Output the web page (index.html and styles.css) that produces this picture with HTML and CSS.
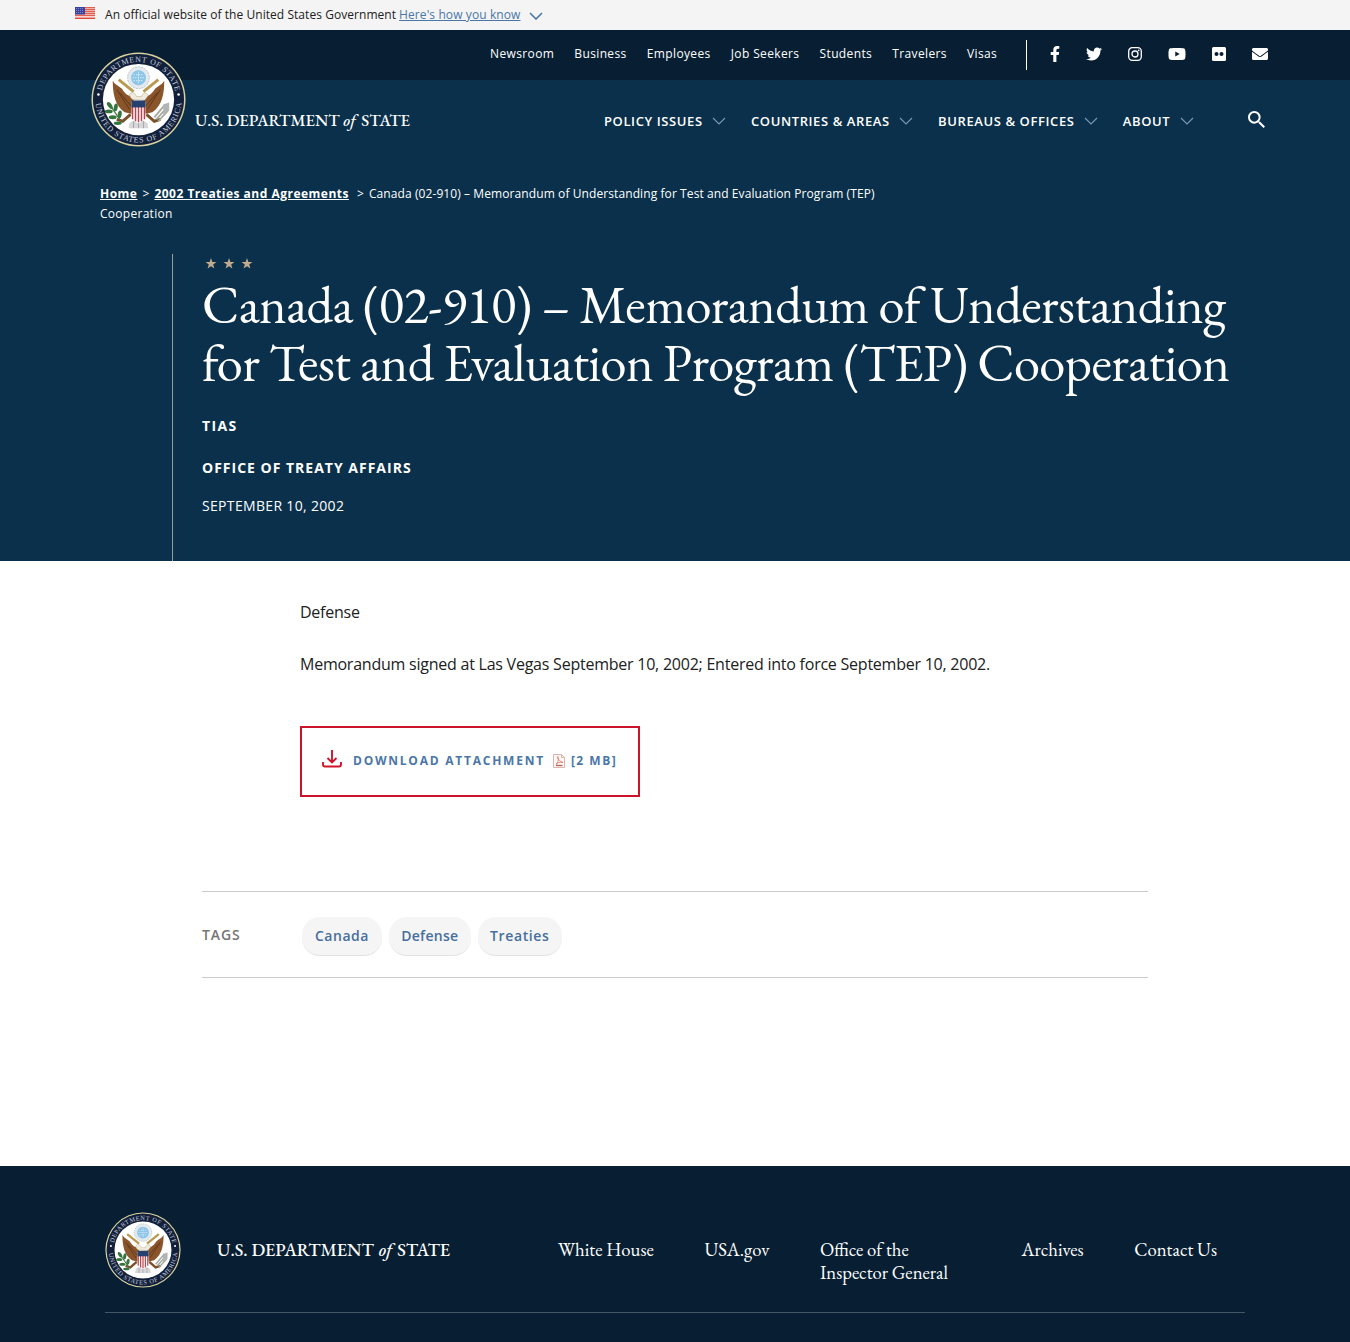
FILE: index.html
```html
<!DOCTYPE html>
<html lang="en">
<head>
<meta charset="utf-8">
<title>Canada (02-910) – Memorandum of Understanding for Test and Evaluation Program (TEP) Cooperation</title>
<link rel="stylesheet" href="styles.css">
</head>
<body>
<svg class="defs" width="0" height="0" aria-hidden="true">
  <symbol id="chev" viewBox="0 0 14 8"><path d="M1 1l6 6 6-6" fill="none" stroke="currentColor"/></symbol>
  <symbol id="star" viewBox="0 0 12 12"><path d="M6 0l1.500 4.300H12L8.400 7.100 9.700 11.500 6 8.900 2.300 11.500 3.600 7.100 0 4.300h4.500z"/></symbol>
  <symbol id="seal" viewBox="0 0 96 96">
    <circle cx="48" cy="48" r="47.500" fill="#d8d3a0"/>
    <circle cx="48" cy="48" r="46" fill="#13203c"/>
    <circle cx="48" cy="48" r="36" fill="#fff"/>
    <path id="arc-top" d="M10 48a38 38 0 0 1 76 0" fill="none"/>
    <path id="arc-bottom" d="M4.500 48a43.500 43.500 0 0 0 87 0" fill="none"/>
    <g font-family="Liberation Serif, serif" font-size="8" fill="#c3cede">
      <text><textPath href="#arc-top" startOffset="9" textLength="102">DEPARTMENT OF STATE</textPath></text>
      <text><textPath href="#arc-bottom" startOffset="4" textLength="129">UNITED STATES OF AMERICA</textPath></text>
    </g>
    <circle cx="7.500" cy="43" r="1.300" fill="#fff"/><circle cx="88.500" cy="43" r="1.300" fill="#fff"/>
    <circle cx="48" cy="26" r="11" fill="#e3e9ec" stroke="#b9c4ca" stroke-dasharray="2 1"/>
    <circle cx="48" cy="26" r="7.500" fill="#8cc5e8"/>
    <path d="M43 23h10M42 26h12M43 29h10M48 20v12" stroke="#d9effa" stroke-width="1" stroke-dasharray="1.500 1"/>
    <path d="M28 28l15 12M68 28L53 40" stroke="#b99a50" stroke-width="3"/>
    <path d="M22 29c0 13 2 25 12 32l9 2V45c-7 0-9-4-12-8-3-3-7-4-9-8zM74 29c0 13-2 25-12 32l-9 2V45c7 0 9-4 12-8 3-3 7-4 9-8z" fill="#8a552b"/>
    <path d="M26 38l13 20M29 41l12 14M70 38L57 58M67 41L55 55" stroke="#5f3518" stroke-width="1"/>
    <path d="M42 48c-4-3-4-7 0-7 2 0 3 2 4 4h5c1-4 5-5 7-1l-4 5z" fill="#eeeae0" stroke="#b7a26e" stroke-width=".5"/>
    <path d="M40 63l-8 7-6-2M56 63l8 7 6-2" stroke="#7c512a" stroke-width="3" fill="none"/>
    <path d="M39 72c3-4 15-4 18 0l1 5H38z" fill="#d8d8da"/><path d="M43 70v7M48 69v8M53 70v7" stroke="#a8a5a8"/>
    <path d="M41 50h14v15c0 4-4 6-7 7-3-1-7-3-7-7z" fill="#fff"/>
    <path d="M42 55v13M45 55v15M48 55v16M51 55v15M54 55v13" stroke="#b94450" stroke-width="1.500"/>
    <path d="M41 49h14v7H41z" fill="#26406f"/>
    <path d="M18 52l13 19" stroke="#477544" stroke-width="1.300"/>
    <g fill="#35753d"><ellipse cx="19" cy="54" rx="4" ry="2" transform="rotate(55 19 54)"/><ellipse cx="18" cy="60" rx="4" ry="2"/><ellipse cx="25" cy="56" rx="4" ry="2" transform="rotate(100 25 56)"/><ellipse cx="22" cy="66" rx="4" ry="2"/><ellipse cx="29" cy="63" rx="4" ry="2" transform="rotate(100 29 63)"/><ellipse cx="27" cy="72" rx="4" ry="1.700"/></g>
    <path d="M66 68l11-12M64 66l11-13M68 70l10-11" stroke="#a6a99e" stroke-width="1.800"/><path d="M73 53l6-2v8l-6 4z" fill="#afb4b4"/>
  </symbol>
</svg>

<div class="banner">
  <svg class="flag" viewBox="0 0 20 12"><path fill="#fff" d="M0 0h20v12H0z"/><path stroke="#e2604f" d="M0 .5h20M0 2.500h20M0 4.500h20M0 6.500h20M0 8.500h20" stroke-width="1.300"/><path fill="#dc4a3d" d="M0 10.500h20V12H0z"/><path fill="#3c42a0" d="M0 0h10v7.500H0z"/><path d="M1 1.500h8M1 3.500h8M1 5.500h8" stroke="#7d84c8" stroke-dasharray="1 1"/></svg>
  <span class="official">An official website of the United States Government</span>
  <a class="know">Here's how you know</a>
  <svg class="banner-chev"><use href="#chev"/></svg>
</div>

<header class="header">
  <a class="brand"><svg class="seal"><use href="#seal"/></svg></a>
  <div class="topbar">
    <nav class="util"><a>Newsroom</a><a>Business</a><a>Employees</a><a>Job Seekers</a><a>Students</a><a>Travelers</a><a>Visas</a></nav>
    <div class="social">
      <svg width="10" height="16" viewBox="0 0 320 512"><path d="M279.140 288l14.220-92.660h-88.910v-60.130c0-25.350 12.420-50.060 52.240-50.060h40.420V6.260S260.430 0 225.360 0c-73.220 0-121.080 44.380-121.080 124.720v70.620H22.890V288h81.390v224h100.170V288z"/></svg>
      <svg width="16" height="16" viewBox="0 0 512 512"><path d="M459.370 151.716c.325 4.548.325 9.097.325 13.645 0 138.720-105.583 298.558-298.558 298.558-59.452 0-114.680-17.219-161.137-47.106 8.447.974 16.568 1.299 25.340 1.299 49.055 0 94.213-16.568 130.274-44.832-46.132-.975-84.792-31.188-98.112-72.772 6.498.974 12.995 1.624 19.818 1.624 9.421 0 18.843-1.300 27.614-3.573-48.081-9.747-84.143-51.980-84.143-102.985v-1.299c13.969 7.797 30.214 12.670 47.431 13.319-28.264-18.843-46.781-51.005-46.781-87.391 0-19.492 5.197-37.360 14.294-52.954 51.655 63.675 129.300 105.258 216.365 109.807-1.624-7.797-2.599-15.918-2.599-24.040 0-57.828 46.782-104.934 104.934-104.934 30.213 0 57.502 12.670 76.670 33.137 23.715-4.548 46.456-13.320 66.599-25.340-7.798 24.366-24.366 44.833-46.132 57.827 21.117-2.273 41.584-8.122 60.426-16.243-14.292 20.791-32.161 39.308-52.628 54.253z"/></svg>
      <svg width="14" height="16" viewBox="0 0 14 16"><rect x=".7" y="1.700" width="12.600" height="12.600" rx="3.500" fill="none" stroke="#fff" stroke-width="1.300"/><circle cx="7" cy="8" r="3" fill="none" stroke="#fff" stroke-width="1.300"/><circle cx="10.700" cy="4.300" r=".9"/></svg>
      <svg width="18" height="16" viewBox="0 0 576 512"><path d="M549.655 124.083c-6.281-23.650-24.787-42.276-48.284-48.597C458.781 64 288 64 288 64S117.220 64 74.629 75.486c-23.497 6.322-42.003 24.947-48.284 48.597-11.412 42.867-11.412 132.305-11.412 132.305s0 89.438 11.412 132.305c6.281 23.650 24.787 41.500 48.284 47.821C117.220 448 288 448 288 448s170.780 0 213.371-11.486c23.497-6.321 42.003-24.171 48.284-47.821 11.412-42.867 11.412-132.305 11.412-132.305s0-89.438-11.412-132.305zm-317.510 213.508V175.185l142.739 81.205-142.739 81.201z"/></svg>
      <svg width="14" height="16" viewBox="0 0 14 16"><rect y="1" width="14" height="14" rx="1.500"/><g fill="#081f33"><circle cx="4.500" cy="8" r="2"/><circle cx="9.500" cy="8" r="2"/></g></svg>
      <svg width="16" height="16" viewBox="0 0 512 512"><path d="M502.300 190.800c3.900-3.100 9.700-.2 9.700 4.700V400c0 26.500-21.500 48-48 48H48c-26.500 0-48-21.500-48-48V195.600c0-5 5.700-7.800 9.700-4.700 22.400 17.400 52.100 39.500 154.100 113.600 21.100 15.400 56.700 47.800 92.200 47.600 35.700.3 72-32.800 92.300-47.600 102-74.100 131.600-96.300 154-113.700zM256 320c23.200.4 56.600-29.200 73.400-41.400 132.700-96.300 142.800-104.700 173.400-128.700 5.800-4.500 9.200-11.500 9.200-18.900v-19c0-26.500-21.500-48-48-48H48c-26.500 0-48 21.500-48 48v19c0 7.400 3.400 14.300 9.200 18.900 30.600 23.900 40.700 32.400 173.400 128.700 16.800 12.200 50.200 41.800 73.400 41.400z"/></svg>
    </div>
  </div>
  <div class="mainbar">
    <span class="wordmark">U.S. DEPARTMENT <i>of</i> STATE</span>
    <nav class="main-nav">
      <a>POLICY ISSUES<svg><use href="#chev"/></svg></a>
      <a>COUNTRIES &amp; AREAS<svg><use href="#chev"/></svg></a>
      <a>BUREAUS &amp; OFFICES<svg><use href="#chev"/></svg></a>
      <a>ABOUT<svg><use href="#chev"/></svg></a>
    </nav>
    <svg class="search" viewBox="3 3 17.500 17.500"><path d="M15.500 14h-.79l-.28-.27A6.471 6.471 0 0 0 16 9.500 6.500 6.500 0 1 0 9.500 16c1.610 0 3.090-.59 4.230-1.570l.27.28v.79l5 4.990L20.490 19l-4.990-5zm-6 0C7.010 14 5 11.990 5 9.500S7.010 5 9.500 5 14 7.010 14 9.500 11.990 14 9.500 14z"/></svg>
  </div>
</header>

<section class="hero">
  <p class="crumbs"><a>Home</a><span class="sep">&gt;</span><a>2002 Treaties and Agreements</a><span class="sep wide">&gt;</span><span>Canada (02-910) – Memorandum of Understanding for Test and Evaluation Program (TEP)<br><span class="crumb-end">Cooperation</span></span></p>
  <div class="hero-body">
    <div class="stars"><svg><use href="#star"/></svg><svg><use href="#star"/></svg><svg><use href="#star"/></svg></div>
    <h1>Canada (02-910) – Memorandum of Understanding<br>for Test and Evaluation Program (TEP) Cooperation</h1>
    <p class="kind">TIAS</p>
    <p class="office">OFFICE OF TREATY AFFAIRS</p>
    <p class="date">SEPTEMBER 10, 2002</p>
  </div>
</section>

<main class="content">
  <article class="entry">
    <p>Defense</p>
    <p>Memorandum signed at Las Vegas September 10, 2002; Entered into force September 10, 2002.</p>
    <a class="download">
      <svg class="dl-icon" viewBox="0 0 20 18"><path d="M10 0v12M5.500 8l4.500 4.500L14.500 8M1 12v2.500a2 2 0 0 0 2 2h14a2 2 0 0 0 2-2V12" fill="none" stroke="#d0142c" stroke-width="1.900"/></svg>
      <span>DOWNLOAD ATTACHMENT</span>
      <svg class="pdf" viewBox="0 0 12 14"><path d="M.5.500h8l3 3v10H.5zM8.500.500v3h3" fill="#fffaf8" stroke="#e3b3aa"/><path d="M4 2.500c1 3 3 5 6 6-3-1-5 0-7 2 2-2 3-4 2-8" fill="none" stroke="#d8604e" stroke-width=".7"/><path d="M3 11.500h6.500" stroke="#a9655b" stroke-width="1.300"/></svg>
      <span class="size">[2 MB]</span>
    </a>
  </article>
  <div class="tags"><span class="tags-title">TAGS</span><a>Canada</a><a>Defense</a><a>Treaties</a></div>
</main>

<footer class="footer">
  <div class="footer-row">
    <svg class="footer-seal"><use href="#seal"/></svg>
    <span class="wordmark">U.S. DEPARTMENT <i>of</i> STATE</span>
    <nav class="footer-nav"><a>White House</a><a>USA.gov</a><a class="oig">Office of the<br>Inspector General</a><a>Archives</a><a>Contact Us</a></nav>
  </div>
</footer>
</body>
</html>
```
FILE: styles.css
```css
* { box-sizing: border-box; }
body { margin: 0; height: 1342px; overflow: hidden; background: #fff; color: #212121; font-family: "Open Sans", sans-serif; }
p, h1 { margin: 0; }
svg { display: block; flex: none; }
a { color: inherit; }
.defs { position: absolute; }

.banner { height: 30px; padding-left: 75px; background: #f4f4f4; display: flex; align-items: center; font-size: 12px; line-height: 30px; white-space: nowrap; }
.flag { width: 20px; height: 12px; margin: -4px 10px 0 0; }
.official { width: 294px; letter-spacing: .05px; }
.know { color: #4a77a8; text-decoration: underline; letter-spacing: .1px; }
.banner-chev { width: 14px; height: 8px; margin: 1px 0 0 9px; color: #4a77a8; stroke-width: 1.6; }

.header { position: relative; color: #fff; }
.brand { position: absolute; left: 91px; top: 22px; }
.seal { width: 95px; height: 95px; }
.topbar { height: 50px; background: #081f33; display: flex; align-items: center; padding-left: 490px; }
.util { display: flex; font-size: 12px; letter-spacing: .37px; gap: 20.1px; white-space: nowrap; width: 536px; margin-top: -3px; }
.social { height: 30px; border-left: 1px solid #fff; display: flex; align-items: center; gap: 26px; padding: 0 0 2px 23px; fill: #fff; }
.mainbar { height: 90px; background: #0a304b; display: flex; align-items: flex-start; padding: 30px 0 0 195px; }
.wordmark { font-family: "EB Garamond", "Liberation Serif", serif; white-space: nowrap; font-weight: 500; }
.wordmark i { margin: 0 1px; }
.header .wordmark { width: 409px; font-size: 16.7px; line-height: 20px; }
.header .wordmark i { margin: 0 2px 0 0; }
.main-nav { display: flex; gap: 25px; width: 644px; font-size: 13px; line-height: 22px; font-weight: 600; letter-spacing: .6px; white-space: nowrap; }
.main-nav a { display: flex; align-items: center; gap: 9.3px; }
.main-nav svg { width: 14px; height: 8px; color: #7d9ab2; stroke-width: 1.1; }
.search { width: 17px; height: 17px; margin-top: 1px; fill: #fff; }

.hero { height: 391px; background: #0a304b; color: #fff; padding: 14px 100px 0; }
.crumbs { font-size: 12px; line-height: 20px; height: 70px; letter-spacing: .09px; white-space: nowrap; }
.crumbs a { font-weight: 700; text-decoration: underline; letter-spacing: .49px; }
.crumb-end { letter-spacing: .28px; }
.sep { margin: 0 5px; }
.sep.wide { margin-left: 8px; }
.hero-body { height: 307px; margin-left: 72px; border-left: 1px solid #9a9c95; padding: 4px 0 0 29px; white-space: nowrap; }
.stars { display: flex; gap: 6px; padding-left: 3px; fill: #c0a98d; }
.stars svg { width: 12px; height: 11px; }
h1 { font: 400 52.5px/58px "EB Garamond", "Liberation Serif", serif; margin-top: 7px; letter-spacing: -.59px; }
.kind, .office { font-size: 14px; line-height: 20px; font-weight: 700; letter-spacing: 1px; }
.kind { margin-top: 24px; letter-spacing: 1.35px; }
.office { margin-top: 22px; }
.date { font-size: 14px; line-height: 20px; margin-top: 18px; letter-spacing: .33px; }

.content { height: 605px; padding: 38px 202px 0; }
.entry { padding-left: 98px; font-size: 16px; line-height: 26px; white-space: nowrap; height: 292px; letter-spacing: -.235px; }
.entry p { margin-bottom: 26px; }
.download { display: flex; align-items: center; margin-top: 49px; width: 340px; height: 71px; border: 2px solid #cb1429; padding: 0 0 2px 20px; color: #4a77a8; font-size: 12px; font-weight: 700; letter-spacing: 1.76px; }
.dl-icon { width: 20px; height: 18px; margin: -4px 11px 0 0; }
.pdf { width: 12px; height: 14px; margin: 1px 6px 0 8px; }
.size { letter-spacing: 1.5px; }
.tags { height: 87px; border: solid #c9cccf; border-width: 1px 0; display: flex; align-items: center; width: 946px; font-size: 14px; font-weight: 600; gap: 7px; letter-spacing: .4px; }
.tags-title { width: 93px; color: #757575; letter-spacing: .9px; }
.tags a { height: 39px; line-height: 37px; margin-top: 3px; border-radius: 18px; padding: 0 12.3px; background: #f5f5f5; border-bottom: 1px solid #e2e2e2; color: #476f9d; letter-spacing: .3px; }
.tags-title + a { padding: 0 13px; letter-spacing: .5px; }
.tags a:last-child { letter-spacing: .6px; }

.footer { height: 176px; background: #081f33; color: #fff; padding: 46px 105px 0; }
.footer-row { height: 101px; border-bottom: 1px solid #435766; display: flex; align-items: flex-start; }
.footer-seal { width: 76px; height: 76px; margin-right: 36px; }
.footer .wordmark { width: 341px; padding-top: 26px; font-size: 18.1px; line-height: 24px; }
.footer-nav { display: flex; gap: 50.6px; padding-top: 26px; font: 18.7px/23px "EB Garamond", "Liberation Serif", serif; white-space: nowrap; }
.oig { width: 151px; }
```
